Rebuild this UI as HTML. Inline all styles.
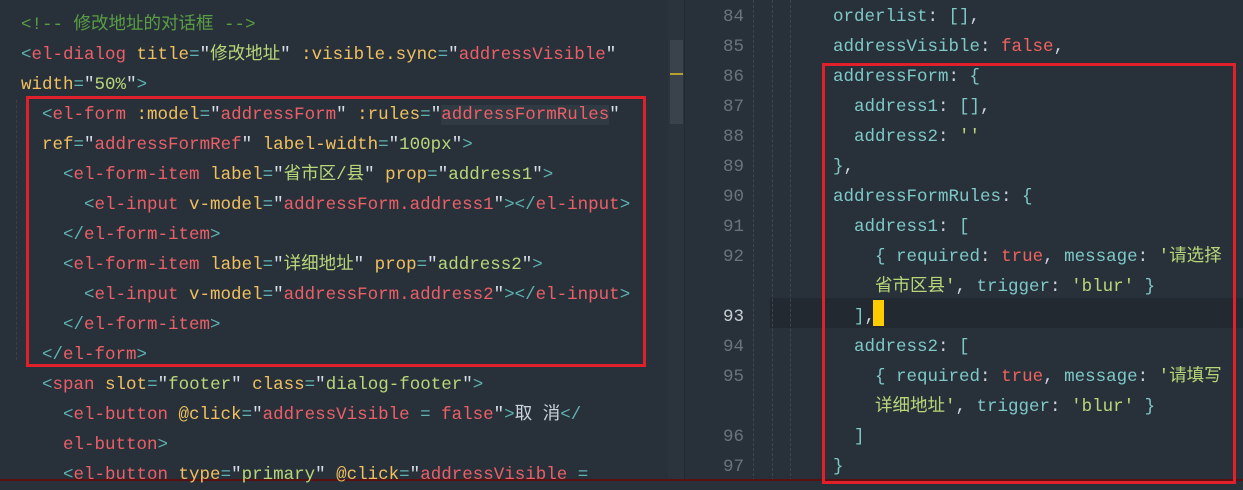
<!DOCTYPE html>
<html><head><meta charset="utf-8"><style>
body{margin:0;width:1243px;height:481px;background:#28313a;overflow:hidden;position:relative;font-family:"Liberation Mono","Noto Sans CJK SC",monospace;font-size:17.5px;}
.l{position:absolute;white-space:pre;line-height:30px;height:30px;margin-top:2px}
.c{color:#5a9e45}.p{color:#5fb3b3}.t{color:#ec5f67}.a{color:#f0c060}.q{color:#d8dee9}.s{color:#ec5f67}.g{color:#b8d77a}.k{color:#7ec8c8}.r{color:#f0625f}.w{color:#cdd3de}
.ln{position:absolute;left:700px;width:44px;text-align:right;color:#6b747d;line-height:30px;margin-top:2px}
.box{position:absolute;border:3px solid #e0202a;}
.gd{position:absolute;width:0;border-left:1px dashed #3c464f}
</style></head><body>
<div style="position:absolute;left:668px;top:0;width:16px;height:481px;background:#2b343c"></div>
<div style="position:absolute;left:670px;top:40px;width:13px;height:84px;background:#3a434b"></div>
<div style="position:absolute;left:670px;top:73px;width:13px;height:2px;background:#b8a030"></div>
<div style="position:absolute;left:684px;top:0;width:1px;height:481px;background:#222a31"></div>
<div style="position:absolute;left:770px;top:298px;width:473px;height:30px;background:#222930"></div>
<div style="position:absolute;left:873px;top:300px;width:11px;height:26px;background:#ffcc00"></div>
<div class="gd" style="left:753px;top:0;height:481px"></div>
<div class="gd" style="left:772px;top:0;height:481px"></div>
<div class="gd" style="left:790px;top:0;height:481px"></div>
<div class="gd" style="left:16px;top:100px;height:260px;border-color:#4a3a40"></div>
<div style="position:absolute;left:0;top:479px;width:1243px;height:2px;background:#5a1010"></div>

<div class="l" style="left:21px;top:8px"><span class="c">&lt;!-- 修改地址的对话框 --&gt;</span></div>
<div class="l" style="left:21px;top:38px"><span class="p">&lt;</span><span class="t">el-dialog</span> <span class="a">title</span><span class="p">=</span><span class="q">"</span><span class="g">修改地址</span><span class="q">"</span> <span class="a">:visible.sync</span><span class="p">=</span><span class="q">"</span><span class="s">addressVisible</span><span class="q">"</span></div>
<div class="l" style="left:21px;top:68px"><span class="a">width</span><span class="p">=</span><span class="q">"</span><span class="g">50%</span><span class="q">"</span><span class="p">&gt;</span></div>
<div class="l" style="left:42px;top:98px"><span class="p">&lt;</span><span class="t">el-form</span> <span class="a">:model</span><span class="p">=</span><span class="q">"</span><span class="s">addressForm</span><span class="q">"</span> <span class="a">:rules</span><span class="p">=</span><span class="q">"</span><span class="s" style="background:#2f3a42">addressFormRules</span><span class="q">"</span></div>
<div class="l" style="left:42px;top:128px"><span class="a">ref</span><span class="p">=</span><span class="q">"</span><span class="s">addressFormRef</span><span class="q">"</span> <span class="a">label-width</span><span class="p">=</span><span class="q">"</span><span class="g">100px</span><span class="q">"</span><span class="p">&gt;</span></div>
<div class="l" style="left:63px;top:158px"><span class="p">&lt;</span><span class="t">el-form-item</span> <span class="a">label</span><span class="p">=</span><span class="q">"</span><span class="g">省市区/县</span><span class="q">"</span> <span class="a">prop</span><span class="p">=</span><span class="q">"</span><span class="g">address1</span><span class="q">"</span><span class="p">&gt;</span></div>
<div class="l" style="left:84px;top:188px"><span class="p">&lt;</span><span class="t">el-input</span> <span class="a">v-model</span><span class="p">=</span><span class="q">"</span><span class="s">addressForm.address1</span><span class="q">"</span><span class="p">&gt;&lt;/</span><span class="t">el-input</span><span class="p">&gt;</span></div>
<div class="l" style="left:63px;top:218px"><span class="p">&lt;/</span><span class="t">el-form-item</span><span class="p">&gt;</span></div>
<div class="l" style="left:63px;top:248px"><span class="p">&lt;</span><span class="t">el-form-item</span> <span class="a">label</span><span class="p">=</span><span class="q">"</span><span class="g">详细地址</span><span class="q">"</span> <span class="a">prop</span><span class="p">=</span><span class="q">"</span><span class="g">address2</span><span class="q">"</span><span class="p">&gt;</span></div>
<div class="l" style="left:84px;top:278px"><span class="p">&lt;</span><span class="t">el-input</span> <span class="a">v-model</span><span class="p">=</span><span class="q">"</span><span class="s">addressForm.address2</span><span class="q">"</span><span class="p">&gt;&lt;/</span><span class="t">el-input</span><span class="p">&gt;</span></div>
<div class="l" style="left:63px;top:308px"><span class="p">&lt;/</span><span class="t">el-form-item</span><span class="p">&gt;</span></div>
<div class="l" style="left:42px;top:338px"><span class="p">&lt;/</span><span class="t">el-form</span><span class="p">&gt;</span></div>
<div class="l" style="left:42px;top:368px"><span class="p">&lt;</span><span class="t">span</span> <span class="a">slot</span><span class="p">=</span><span class="q">"</span><span class="g">footer</span><span class="q">"</span> <span class="a">class</span><span class="p">=</span><span class="q">"</span><span class="g">dialog-footer</span><span class="q">"</span><span class="p">&gt;</span></div>
<div class="l" style="left:63px;top:398px"><span class="p">&lt;</span><span class="t">el-button</span> <span class="a">@click</span><span class="p">=</span><span class="q">"</span><span class="s">addressVisible <span class="p">=</span> false</span><span class="q">"</span><span class="p">&gt;</span><span class="w">取 消</span><span class="p">&lt;/</span></div>
<div class="l" style="left:63px;top:428px"><span class="t">el-button</span><span class="p">&gt;</span></div>
<div class="l" style="left:63px;top:458px"><span class="p">&lt;</span><span class="t">el-button</span> <span class="a">type</span><span class="p">=</span><span class="q">"</span><span class="g">primary</span><span class="q">"</span> <span class="a">@click</span><span class="p">=</span><span class="q">"</span><span class="s">addressVisible <span class="p">=</span></span></div>
<div class="box" style="left:26px;top:96px;width:614px;height:265px"></div>

<div class="ln" style="top:0">84</div><div class="ln" style="top:30px">85</div><div class="ln" style="top:60px">86</div><div class="ln" style="top:90px">87</div><div class="ln" style="top:120px">88</div><div class="ln" style="top:150px">89</div><div class="ln" style="top:180px">90</div><div class="ln" style="top:210px">91</div><div class="ln" style="top:240px">92</div><div class="ln" style="top:300px;color:#c8cdd2">93</div><div class="ln" style="top:330px">94</div><div class="ln" style="top:360px">95</div><div class="ln" style="top:420px">96</div><div class="ln" style="top:450px">97</div>

<div class="l" style="left:833px;top:0"><span class="k">orderlist</span><span class="w">: </span><span class="k">[]</span><span class="w">,</span></div>
<div class="l" style="left:833px;top:30px"><span class="k">addressVisible</span><span class="w">: </span><span class="r">false</span><span class="w">,</span></div>
<div class="l" style="left:833px;top:60px"><span class="k">addressForm</span><span class="w">: </span><span class="k">{</span></div>
<div class="l" style="left:854px;top:90px"><span class="k">address1</span><span class="w">: </span><span class="k">[]</span><span class="w">,</span></div>
<div class="l" style="left:854px;top:120px"><span class="k">address2</span><span class="w">: </span><span class="g">''</span></div>
<div class="l" style="left:833px;top:150px"><span class="k">}</span><span class="w">,</span></div>
<div class="l" style="left:833px;top:180px"><span class="k">addressFormRules</span><span class="w">: </span><span class="k">{</span></div>
<div class="l" style="left:854px;top:210px"><span class="k">address1</span><span class="w">: </span><span class="k">[</span></div>
<div class="l" style="left:875px;top:240px"><span class="k">{</span> <span class="k">required</span><span class="w">: </span><span class="r">true</span><span class="w">, </span><span class="k">message</span><span class="w">: </span><span class="g">'请选择</span></div>
<div class="l" style="left:875px;top:270px"><span class="g">省市区县'</span><span class="w">, </span><span class="k">trigger</span><span class="w">: </span><span class="g">'blur'</span> <span class="k">}</span></div>
<div class="l" style="left:854px;top:300px"><span class="k">]</span><span class="w">,</span></div>
<div class="l" style="left:854px;top:330px"><span class="k">address2</span><span class="w">: </span><span class="k">[</span></div>
<div class="l" style="left:875px;top:360px"><span class="k">{</span> <span class="k">required</span><span class="w">: </span><span class="r">true</span><span class="w">, </span><span class="k">message</span><span class="w">: </span><span class="g">'请填写</span></div>
<div class="l" style="left:875px;top:390px"><span class="g">详细地址'</span><span class="w">, </span><span class="k">trigger</span><span class="w">: </span><span class="g">'blur'</span> <span class="k">}</span></div>
<div class="l" style="left:854px;top:420px"><span class="k">]</span></div>
<div class="l" style="left:833px;top:450px"><span class="k">}</span></div>
<div class="box" style="left:822px;top:63px;width:408px;height:415px"></div>
</body></html>
